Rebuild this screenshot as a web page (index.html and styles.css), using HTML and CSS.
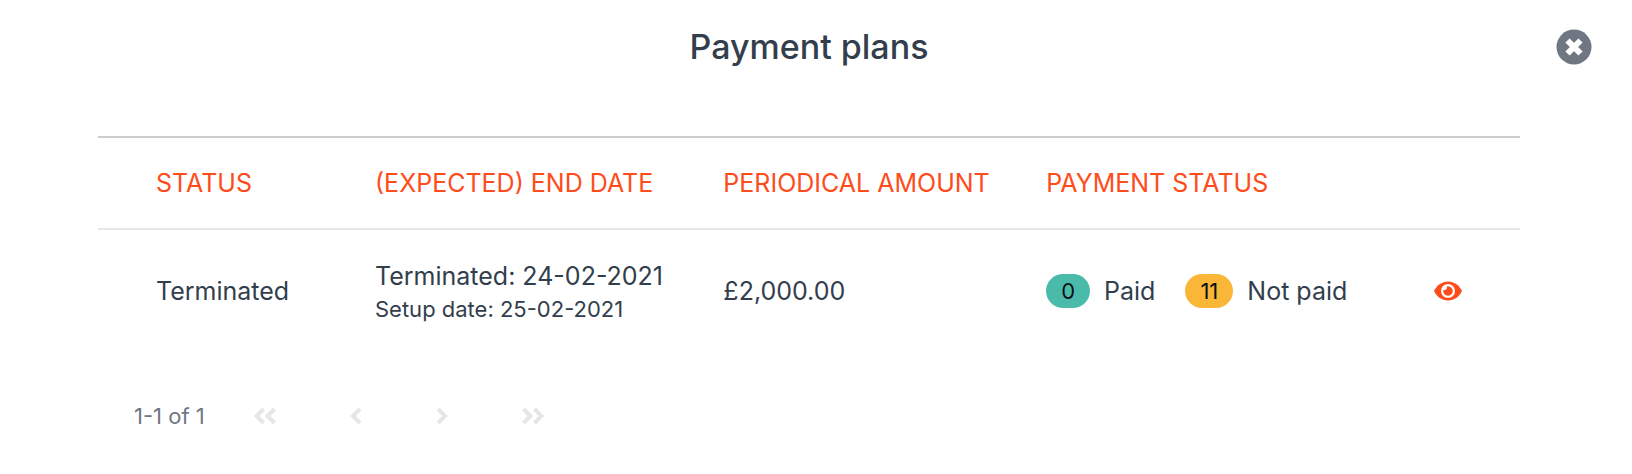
FILE: index.html
```html
<!DOCTYPE html>
<html lang="en">
<head>
<meta charset="utf-8">
<meta name="viewport" content="width=device-width, initial-scale=1">
<title>Payment plans</title>
<link rel="stylesheet" href="styles.css">
</head>
<body>
<main class="dialog">
  <header class="dialog-header">
    <h1 class="dialog-title">Payment plans</h1>
    <button class="icon-button" type="button" aria-label="Close">
      <svg class="close-icon" viewBox="0 0 36 36" aria-hidden="true"><circle cx="18" cy="18" r="17.5" fill="#6f7782"/><path d="M11.500 11.500l13 13M24.500 11.500l-13 13" stroke="#fff" stroke-width="6"/></svg>
    </button>
  </header>
  <section class="plans">
    <table class="plans-table">
      <thead>
        <tr>
          <th class="col-status" scope="col">STATUS</th>
          <th class="col-date" scope="col">(EXPECTED) END DATE</th>
          <th class="col-amount" scope="col">PERIODICAL AMOUNT</th>
          <th class="col-payment" scope="col">PAYMENT STATUS</th>
          <td class="col-action"></td>
        </tr>
      </thead>
      <tbody>
        <tr>
          <td>Terminated</td>
          <td>
            <div class="end-date">Terminated: 24-02-2021</div>
            <div class="setup-date">Setup date: 25-02-2021</div>
          </td>
          <td>£2,000.00</td>
          <td>
            <div class="counts">
              <span class="count"><span class="badge badge-paid">0</span>Paid</span>
              <span class="count"><span class="badge badge-unpaid">11</span>Not paid</span>
            </div>
          </td>
          <td>
            <button class="icon-button" type="button" aria-label="View plan">
              <svg class="eye-icon" viewBox="0 0 28 20" aria-hidden="true"><path d="M0 10C3 4 8 .500 14 .500S25 4 28 10C25 16 20 19.500 14 19.500S3 16 0 10z" fill="#ff4c1b"/><circle cx="14" cy="10" r="7" fill="#fff"/><path d="M14 5.300a4.700 4.700 0 1 1-4.500 3.400 2.400 2.400 0 0 0 3.300-3.200A4.700 4.700 0 0 1 14 5.300z" fill="#ff4c1b"/></svg>
            </button>
          </td>
        </tr>
      </tbody>
    </table>
    <nav class="pager" aria-label="Pagination">
      <span class="pager-range">1-1 of 1</span>
      <button class="icon-button page-first" type="button" disabled aria-label="First page"><svg class="double-icon" viewBox="0 0 22 18"><path d="M9.500 2l-7 7 7 7M20.500 2l-7 7 7 7"/></svg></button>
      <button class="icon-button page-step" type="button" disabled aria-label="Previous page"><svg class="single-icon" viewBox="0 0 12 18"><path d="M10 2L3 9l7 7"/></svg></button>
      <button class="icon-button page-step" type="button" disabled aria-label="Next page"><svg class="single-icon" viewBox="0 0 12 18"><path d="M2 2l7 7-7 7"/></svg></button>
      <button class="icon-button page-step" type="button" disabled aria-label="Last page"><svg class="double-icon" viewBox="0 0 22 18"><path d="M1.500 2l7 7-7 7M12.500 2l7 7-7 7"/></svg></button>
    </nav>
  </section>
</main>
</body>
</html>
```
FILE: styles.css
```css
* { box-sizing: border-box; }
body {
  margin: 0;
  background: #fff;
  color: #323e4c;
  font-family: Inter, "Liberation Sans", sans-serif;
  font-size: 25px;
  line-height: 36px;
}
.dialog-header {
  display: grid;
  grid-template-columns: 1fr auto 1fr;
  align-items: center;
  padding: 24px 40px 0 26px;
}
.dialog-title {
  grid-column: 2;
  margin: 0;
  font-size: 34px;
  line-height: 46px;
  font-weight: 500;
}
.dialog-header .icon-button { justify-self: end; }
.icon-button {
  display: flex;
  padding: 0;
  border: 0;
  background: none;
  cursor: pointer;
}
.icon-button:disabled { cursor: default; }
.close-icon { width: 36px; height: 36px; }
.eye-icon { width: 28px; height: 20px; }
.plans { padding: 66px 112px 40px 98px; }
.plans-table {
  width: 100%;
  table-layout: fixed;
  border-collapse: collapse;
  border-top: 2px solid #cccccc;
}
.plans-table th,
.plans-table td {
  padding: 0 0 0 58px;
  text-align: left;
  vertical-align: middle;
  font-weight: 400;
  white-space: nowrap;
}
.plans-table thead tr {
  height: 92px;
  border-bottom: 2px solid #e6e6e6;
}
.plans-table tbody tr { height: 122px; }
.plans-table th { color: #ff4c1b; }
.col-status { width: 15.4%; }
.col-date { width: 24.5%; }
.col-amount { width: 22.7%; }
.col-payment { width: 27.3%; }
.setup-date { font-size: 22px; line-height: 30px; }
.counts { display: flex; gap: 30px; }
.count { display: flex; align-items: center; gap: 14px; }
.badge {
  padding: 0 15px;
  border-radius: 17px;
  color: #0b1015;
  font-size: 22px;
  line-height: 34px;
}
.badge-paid { background: #4abbab; }
.badge-unpaid { background: #f9b637; }
.pager {
  display: flex;
  align-items: center;
  padding: 47px 0 0 36px;
  color: #6f7782;
  font-size: 22px;
}
.pager svg {
  height: 18px;
  fill: none;
  stroke: #e6e6e6;
  stroke-width: 4;
}
.double-icon { width: 22px; }
.single-icon { width: 12px; }
.page-first { margin-left: 49px; }
.page-step { margin-left: 74px; }
```
